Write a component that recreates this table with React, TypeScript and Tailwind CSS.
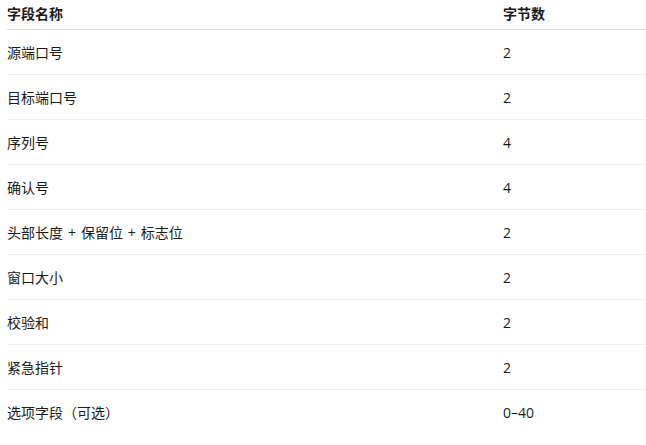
import React from "react";

const rows = [
  ["源端口号", "2"],
  ["目标端口号", "2"],
  ["序列号", "4"],
  ["确认号", "4"],
  ["头部长度 + 保留位 + 标志位", "2"],
  ["窗口大小", "2"],
  ["校验和", "2"],
  ["紧急指针", "2"],
  ["选项字段（可选）", "0–40"],
];

const App = () => {
  return (
    <div
      className="w-[646px] h-[445px] overflow-hidden bg-white pl-[7px] text-[14px] text-[#1a1a1a] [word-spacing:1.3px]"
      style={{ fontFamily: '"Segoe UI", "Open Sans", "Noto Sans CJK SC", sans-serif' }}
    >
      <div className="flex h-[30px] items-start pt-[3px] border-b border-[#dcdcdc] font-bold">
        <div className="w-[496px]">字段名称</div>
        <div>字节数</div>
      </div>
      {rows.map((row, i) => (
        <div
          key={i}
          className={`flex h-[45px] items-center ${i < rows.length - 1 ? "border-b border-[#efefef]" : ""}`}
        >
          <div className="w-[496px]">{row[0]}</div>
          <div>{row[1]}</div>
        </div>
      ))}
    </div>
  );
};

export default App;
